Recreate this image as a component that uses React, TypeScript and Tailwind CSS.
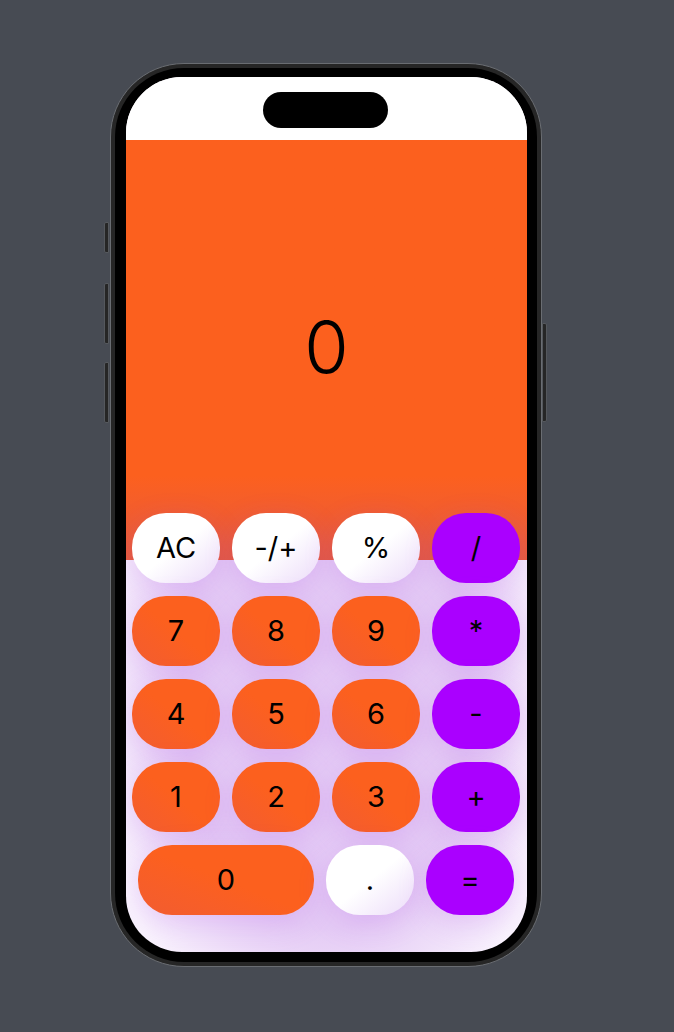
import React from 'react';

type Kind = 'light' | 'num' | 'op';

const kindClass: Record<Kind, string> = {
  light: 'bg-gradient-to-br from-white via-white to-[#ecdcf9]',
  num: 'bg-gradient-to-tr from-[#f25c30] via-[#fc601e] to-[#fc601e]',
  op: 'bg-[#aa00ff]',
};

function Key({ label, kind, wide }: { label: string; kind: Kind; wide?: boolean }) {
  return (
    <button
      className={`${wide ? 'w-[176px]' : 'w-[88px]'} h-[70px] rounded-[34px] flex items-center justify-center text-[29px] text-black shadow-[0_8px_30px_rgba(170,70,230,0.2)] ${kindClass[kind]}`}
    >
      {label}
    </button>
  );
}

const rows: { label: string; kind: Kind }[][] = [
  [
    { label: 'AC', kind: 'light' },
    { label: '-/+', kind: 'light' },
    { label: '%', kind: 'light' },
    { label: '/', kind: 'op' },
  ],
  [
    { label: '7', kind: 'num' },
    { label: '8', kind: 'num' },
    { label: '9', kind: 'num' },
    { label: '*', kind: 'op' },
  ],
  [
    { label: '4', kind: 'num' },
    { label: '5', kind: 'num' },
    { label: '6', kind: 'num' },
    { label: '-', kind: 'op' },
  ],
  [
    { label: '1', kind: 'num' },
    { label: '2', kind: 'num' },
    { label: '3', kind: 'num' },
    { label: '+', kind: 'op' },
  ],
];

export default function App() {
  return (
    <div
      className="min-h-[1032px] w-full bg-[#474b53] pl-[110px] pt-[63px]"
      style={{ fontFamily: 'Inter, "Liberation Sans", sans-serif' }}
    >
      {/* phone body */}
      <div className="relative w-[432px] h-[904px] rounded-[74px] bg-[#262626] border border-[#6a6d72] p-[4px]">
        {/* side buttons */}
        <div className="absolute left-[-7px] top-[158px] w-[5px] h-[31px] rounded-l-[2px] bg-[#262626] border border-[#55585d]" />
        <div className="absolute left-[-7px] top-[219px] w-[5px] h-[61px] rounded-l-[2px] bg-[#262626] border border-[#55585d]" />
        <div className="absolute left-[-7px] top-[298px] w-[5px] h-[61px] rounded-l-[2px] bg-[#262626] border border-[#55585d]" />
        <div className="absolute right-[-6px] top-[259px] w-[5px] h-[99px] rounded-r-[2px] bg-[#262626] border border-[#55585d]" />

        <div className="w-full h-full rounded-[69px] bg-black pt-[9px] pl-[11px] pr-[10px] pb-[10px]">
          {/* screen: lavender glow behind keypad */}
          <div className="relative w-[401px] h-[875px] rounded-[56px] overflow-hidden flex flex-col bg-[radial-gradient(ellipse_58%_44%_at_50%_70%,#e5ccf5_62%,#f9f3fd_100%)]">
            {/* dynamic island */}
            <div className="absolute left-[137px] top-[15px] w-[125px] h-[36px] rounded-full bg-black" />

            <div className="h-[63px] bg-white" />

            <div className="h-[420px] bg-gradient-to-b from-[#fc601e] via-[#fc601e] via-80% to-[#e65a3a] flex items-center justify-center pb-[6px]">
              <span className="text-[72px] font-light text-black leading-none">0</span>
            </div>

            {/* keypad */}
            <div className="-mt-[47px] flex flex-col gap-[13px]">
              {rows.map((row, i) => (
                <div key={i} className="flex gap-[12px] pl-[6px]">
                  {row.map((k) => (
                    <Key key={k.label} label={k.label} kind={k.kind} />
                  ))}
                </div>
              ))}
              <div className="flex gap-[12px] pl-[12px]">
                <Key label="0" kind="num" wide />
                <Key label="." kind="light" />
                <Key label="=" kind="op" />
              </div>
            </div>
          </div>
        </div>
      </div>
    </div>
  );
}
